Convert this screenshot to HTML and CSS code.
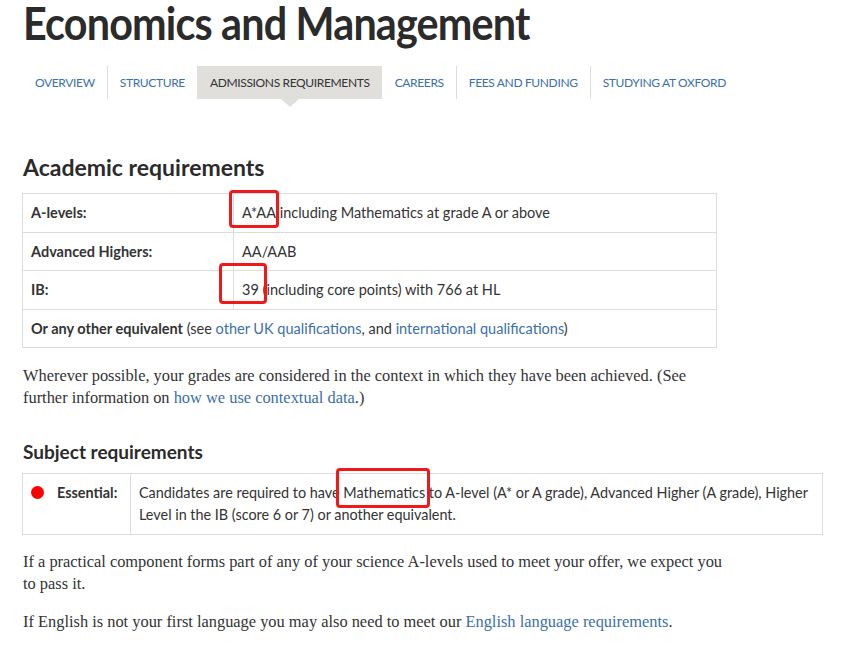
FILE: index.html
```html
<!DOCTYPE html>
<html lang="en">
<head>
<meta charset="utf-8">
<title>Economics and Management</title>
<link rel="stylesheet" href="styles.css">
</head>
<body>
<main class="page">
  <h1 class="title">Economics and Management</h1>
  <nav class="tabs">
    <a class="tab" href="#">OVERVIEW</a>
    <a class="tab" href="#">STRUCTURE</a>
    <a class="tab active" href="#">ADMISSIONS REQUIREMENTS</a>
    <a class="tab" href="#">CAREERS</a>
    <a class="tab" href="#">FEES AND FUNDING</a>
    <a class="tab" href="#">STUDYING AT OXFORD</a>
  </nav>

  <h2 class="h-academic">Academic requirements</h2>
  <table class="req">
    <tr><th>A-levels:</th><td><span class="mark mark-a">A*AA</span> including Mathematics at grade A or above</td></tr>
    <tr><th>Advanced Highers:</th><td>AA/AAB</td></tr>
    <tr><th>IB:</th><td><span class="mark mark-b">39</span> (including core points) with 766 at HL</td></tr>
    <tr><td colspan="2" class="equiv"><b>Or any other equivalent</b> (see <a href="#">other UK qualifications</a>, and <a href="#">international qualifications</a>)</td></tr>
  </table>

  <p class="body-text context">Wherever possible, your grades are considered in the context in which they have been achieved. (See further information on <a href="#">how we use contextual data</a>.)</p>

  <h2 class="h-subject">Subject requirements</h2>
  <table class="subj">
    <tr>
      <th><span class="dot"></span>Essential:</th>
      <td>Candidates are required to have <span class="mark mark-c">Mathematics</span> to A-level (A* or A grade), Advanced Higher (A grade), Higher Level in the IB (score 6 or 7) or another equivalent.</td>
    </tr>
  </table>

  <p class="body-text practical">If a practical component forms part of any of your science A-levels used to meet your offer, we expect you to pass it.</p>
  <p class="body-text english">If English is not your first language you may also need to meet our <a href="#">English language requirements</a>.</p>
</main>
</body>
</html>
```

FILE: styles.css
```css
html, body {
  margin: 0;
  padding: 0;
  background: #ffffff;
}

body {
  color: #333333;
  font-family: "Lato", "Liberation Sans", sans-serif;
}

.page {
  padding: 0 0 0 23px;
}

a {
  color: #3b70a8;
  text-decoration: none;
}

.title {
  margin: -4px 0 0;
  font-family: "Lato", "Liberation Sans", sans-serif;
  font-weight: 700;
  font-size: 45px;
  line-height: 54px;
  color: #2b2b2b;
  letter-spacing: -0.9px;
  white-space: nowrap;
  transform: scaleX(0.918);
  transform-origin: 0 0;
}

.tabs {
  display: flex;
  margin: 16px 0 0 -1px;
  height: 33px;
}

.tab {
  position: relative;
  display: block;
  padding: 0 12px;
  line-height: 33px;
  font-family: "Lato", "Liberation Sans", sans-serif;
  font-size: 12px;
  letter-spacing: -0.35px;
  color: #3b70a8;
  border-left: 1px solid #dcdcd8;
}

.tab:first-child {
  border-left-color: transparent;
}

.tab.active {
  background: #e0dfdb;
  color: #333333;
  border-left-color: #e0dfdb;
}

.tab.active + .tab {
  border-left-color: transparent;
}

.tab.active::after {
  content: "";
  position: absolute;
  left: 50%;
  top: 33px;
  margin-left: -9px;
  border-top: 8px solid #e0dfdb;
  border-left: 9px solid transparent;
  border-right: 9px solid transparent;
}

h2 {
  margin: 0;
  font-family: "Lato", "Liberation Sans", sans-serif;
  font-weight: 700;
  color: #2b2b2b;
}

.h-academic {
  margin-top: 53px;
  font-size: 23px;
  line-height: 30px;
}

.h-subject {
  margin-top: 30px;
  font-size: 19px;
  line-height: 26px;
}

table {
  border-collapse: collapse;
  font-size: 14.5px;
  line-height: 18px;
  color: #333333;
}

.req {
  margin-top: 11px;
  width: 695px;
  margin-left: -1px;
}

.req th,
.req td {
  border: 1px solid #dcdcd8;
  padding: 10px 8px 9.5px;
  text-align: left;
  vertical-align: top;
}

.req th {
  width: 194px;
  font-weight: 700;
}

.subj {
  margin-top: 8px;
  width: 801px;
  margin-left: -1px;
  line-height: 22px;
  font-size: 14.4px;
}

.subj th,
.subj td {
  border: 1px solid #dcdcd8;
  text-align: left;
  vertical-align: top;
  padding: 8px 4px 8px 8px;
}

.subj th {
  width: 95px;
  font-weight: 700;
  white-space: nowrap;
}

.dot {
  display: inline-block;
  width: 13px;
  height: 13px;
  border-radius: 50%;
  background: #ff0000;
  margin-right: 13px;
  vertical-align: -1px;
}

.body-text {
  margin: 0;
  max-width: 710px;
  font-family: "Liberation Serif", serif;
  font-size: 16.4px;
  line-height: 22px;
  color: #333333;
}

.context {
  margin-top: 17px;
}

.practical {
  margin-top: 16px;
}

.english {
  margin-top: 16px;
}

.mark {
  position: relative;
}

.mark::after {
  content: "";
  position: absolute;
  border: 3px solid #f01818;
  border-radius: 4px;
}

.mark-a::after {
  left: -13px;
  right: -3px;
  top: -14px;
  bottom: -7px;
}

.mark-b::after {
  left: -23px;
  right: -8px;
  top: -18px;
  bottom: -6px;
}

.mark-c::after {
  left: -7px;
  right: -5px;
  top: -16px;
  bottom: -7px;
}
```
